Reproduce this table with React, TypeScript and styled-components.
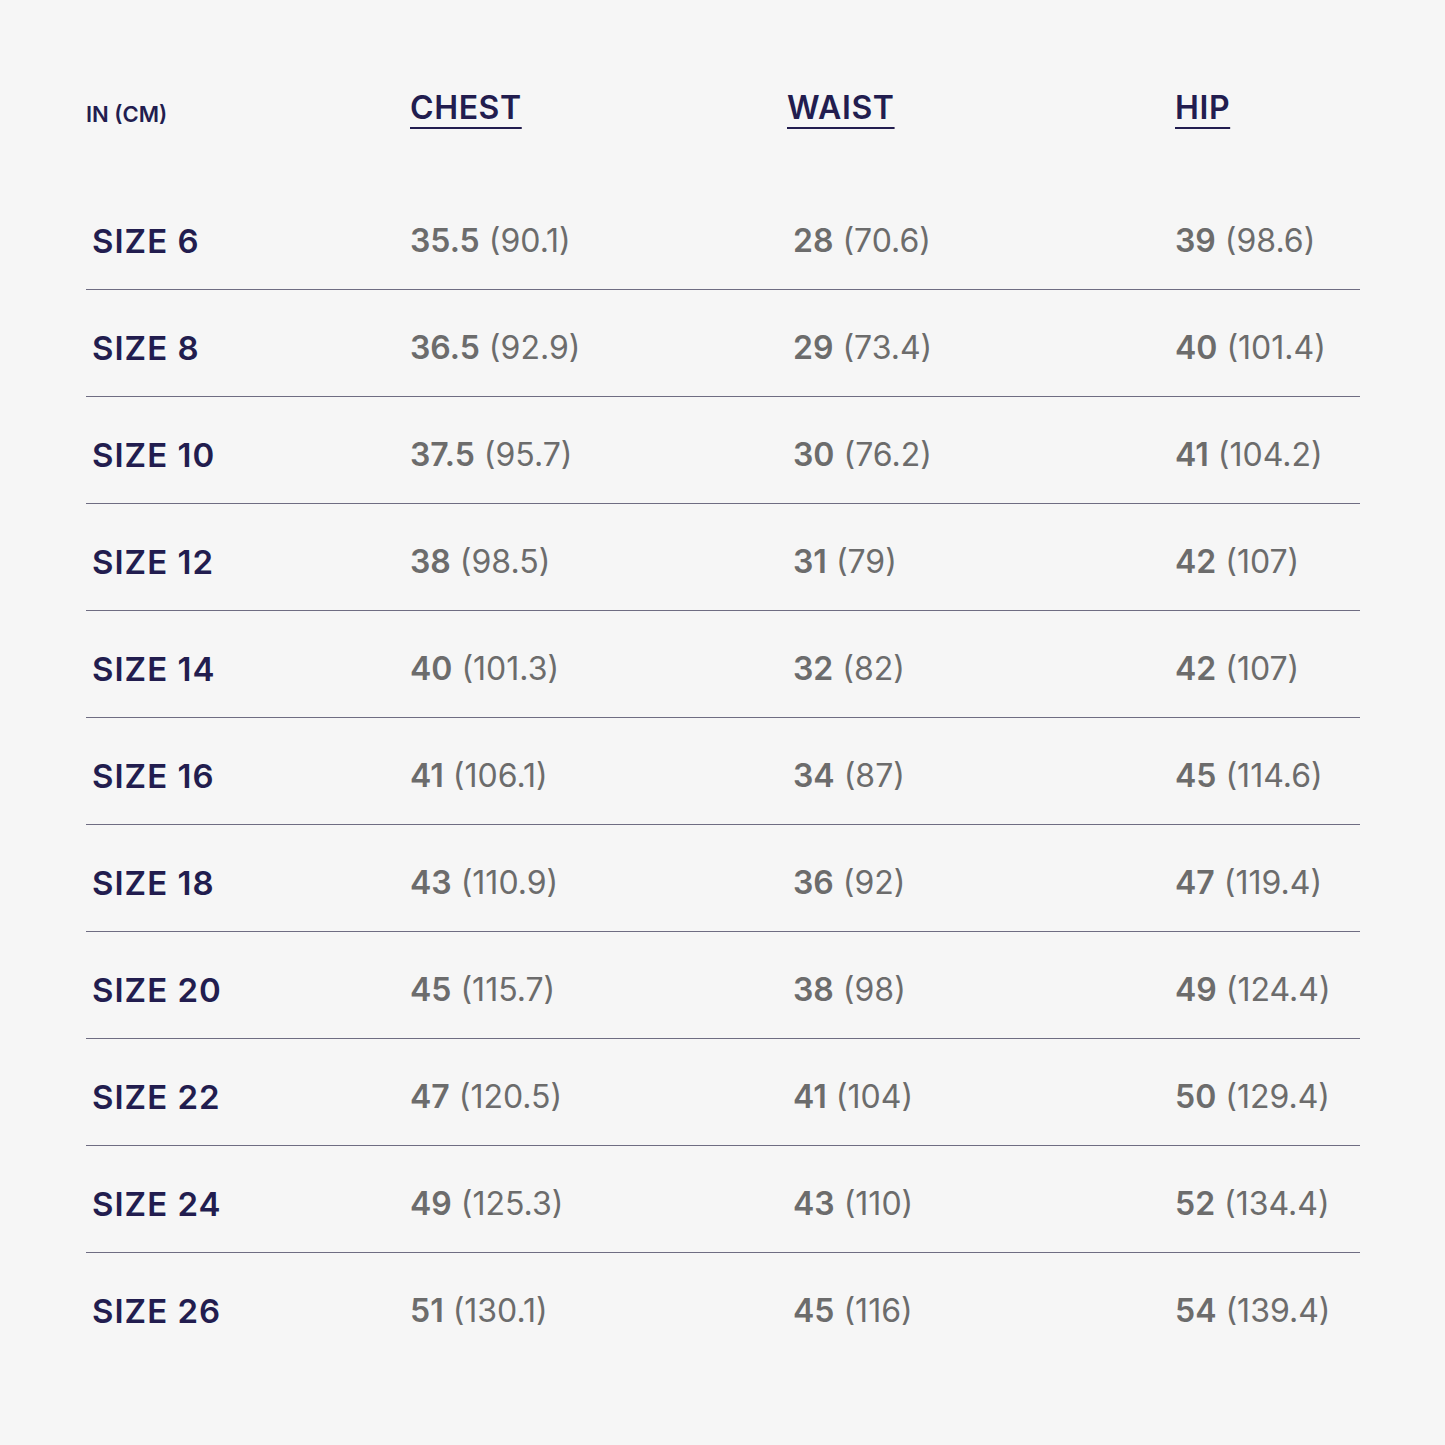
import React from "react";
import styled, { createGlobalStyle } from "styled-components";

const Global = createGlobalStyle`
  html, body { margin: 0; padding: 0; background: #f6f6f6; }
  body { font-family: Inter, "Noto Sans", "Liberation Sans", sans-serif; }
`;

const Page = styled.div`
  width: 1445px;
  height: 1445px;
  background: #f6f6f6;
  box-sizing: border-box;
  padding: 90px 85px 0 86px;
`;

const Grid = `
  display: grid;
  grid-template-columns: 324px 377px 388px 1fr;
`;

const HeadRow = styled.div`
  ${Grid}
  align-items: start;
  height: 93px;
`;

const Unit = styled.div`
  font-size: 22px;
  font-weight: 600;
  color: #221d4f;
  line-height: 26px;
  margin-top: 11px;
`;

const ColHead = styled.div`
  font-size: 32px;
  font-weight: 600;
  color: #221d4f;
  line-height: 36px;
  letter-spacing: 0.6px;
  text-decoration: underline;
  text-decoration-thickness: 2px;
  text-underline-offset: 8px;
`;

const Row = styled.div<{ $last?: boolean }>`
  ${Grid}
  align-items: center;
  padding: 40px 0 30px;
  border-bottom: ${(p) => (p.$last ? "none" : "1px solid #6f6d82")};
`;

const SizeLabel = styled.div`
  font-size: 33px;
  font-weight: 600;
  color: #221d4f;
  line-height: 36px;
  padding-left: 6px;
  letter-spacing: 1px;
`;

const Value = styled.div<{ $shift?: number }>`
  font-size: 32px;
  color: #6c6c6c;
  line-height: 36px;
  margin-left: ${(p) => p.$shift ?? 0}px;
`;

const Num = styled.span`
  font-weight: 600;
`;

const Cm = styled.span`
  font-weight: 400;
`;

const rows: [string, [string, string], [string, string], [string, string]][] = [
  ["SIZE 6", ["35.5", "90.1"], ["28", "70.6"], ["39", "98.6"]],
  ["SIZE 8", ["36.5", "92.9"], ["29", "73.4"], ["40", "101.4"]],
  ["SIZE 10", ["37.5", "95.7"], ["30", "76.2"], ["41", "104.2"]],
  ["SIZE 12", ["38", "98.5"], ["31", "79"], ["42", "107"]],
  ["SIZE 14", ["40", "101.3"], ["32", "82"], ["42", "107"]],
  ["SIZE 16", ["41", "106.1"], ["34", "87"], ["45", "114.6"]],
  ["SIZE 18", ["43", "110.9"], ["36", "92"], ["47", "119.4"]],
  ["SIZE 20", ["45", "115.7"], ["38", "98"], ["49", "124.4"]],
  ["SIZE 22", ["47", "120.5"], ["41", "104"], ["50", "129.4"]],
  ["SIZE 24", ["49", "125.3"], ["43", "110"], ["52", "134.4"]],
  ["SIZE 26", ["51", "130.1"], ["45", "116"], ["54", "139.4"]],
];

const Cell = ({ v, shift }: { v: [string, string]; shift?: number }) => (
  <Value $shift={shift}>
    <Num>{v[0]}</Num> <Cm>({v[1]})</Cm>
  </Value>
);

export default function App() {
  return (
    <Page>
      <Global />
      <HeadRow>
        <Unit>IN (CM)</Unit>
        <ColHead>CHEST</ColHead>
        <ColHead>WAIST</ColHead>
        <ColHead>HIP</ColHead>
      </HeadRow>
      {rows.map((r, i) => (
        <Row key={r[0]} $last={i === rows.length - 1}>
          <SizeLabel>{r[0]}</SizeLabel>
          <Cell v={r[1]} />
          <Cell v={r[2]} shift={6} />
          <Cell v={r[3]} />
        </Row>
      ))}
    </Page>
  );
}
